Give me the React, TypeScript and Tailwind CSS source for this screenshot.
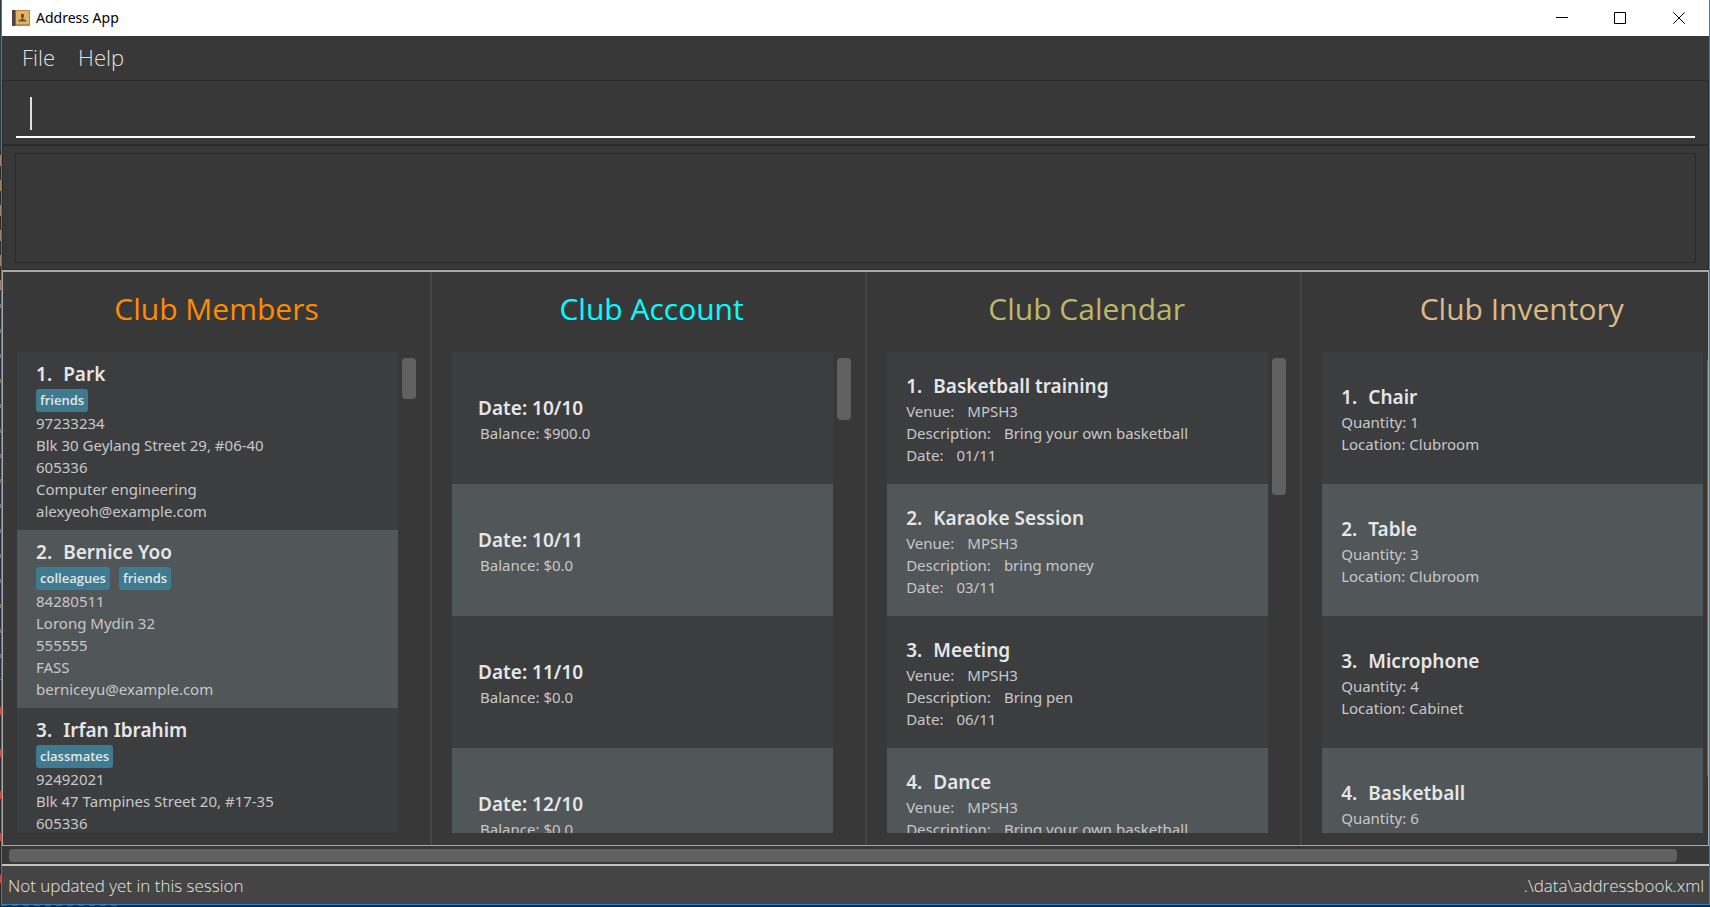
import type { ReactNode } from "react";

type Member = { name: string; tags: string[]; lines: string[] };

const members: Member[] = [
  {
    name: "Park",
    tags: ["friends"],
    lines: ["97233234", "Blk 30 Geylang Street 29, #06-40", "605336", "Computer engineering", "alexyeoh@example.com"],
  },
  {
    name: "Bernice Yoo",
    tags: ["colleagues", "friends"],
    lines: ["84280511", "Lorong Mydin 32", "555555", "FASS", "berniceyu@example.com"],
  },
  {
    name: "Irfan Ibrahim",
    tags: ["classmates"],
    lines: ["92492021", "Blk 47 Tampines Street 20, #17-35", "605336"],
  },
];

const accounts = [
  { date: "10/10", balance: "$900.0" },
  { date: "10/11", balance: "$0.0" },
  { date: "11/10", balance: "$0.0" },
  { date: "12/10", balance: "$0.0" },
];

const events = [
  { name: "Basketball training", venue: "MPSH3", description: "Bring your own basketball", date: "01/11" },
  { name: "Karaoke Session", venue: "MPSH3", description: "bring money", date: "03/11" },
  { name: "Meeting", venue: "MPSH3", description: "Bring pen", date: "06/11" },
  { name: "Dance", venue: "MPSH3", description: "Bring your own basketball", date: "" },
];

const items = [
  { name: "Chair", quantity: 1, location: "Clubroom" },
  { name: "Table", quantity: 3, location: "Clubroom" },
  { name: "Microphone", quantity: 4, location: "Cabinet" },
  { name: "Basketball", quantity: 6, location: "" },
];

const row = "shrink-0 odd:bg-[#3c3d3f] even:bg-[#515658]";
const centered = `${row} flex h-[132px] flex-col justify-center pl-[19px]`;

function AppIcon() {
  return (
    <svg width="18" height="18" viewBox="0 0 18 18" aria-hidden="true">
      <rect x="0" y="1" width="18" height="16" fill="#b98a4c" />
      <rect x="0" y="1" width="3" height="16" fill="#4c4245" />
      <rect x="3" y="1" width="1" height="16" fill="#8a6a45" />
      <rect x="4" y="2" width="13" height="13" fill="#e2b364" />
      <path d="M9 5h3v2.600l-.8 1.400v1.200l2.800.8v1.500H6.500V11l3.200-.8V9L9 7.600z" fill="#6b4f2c" />
    </svg>
  );
}

function Heading({ index, children }: { index?: number; children: ReactNode }) {
  return (
    <h3 className="flex gap-[11px] text-[19px] leading-7 font-semibold text-[#e6e6e6]">
      {index !== undefined && <span>{index}.</span>}
      <span>{children}</span>
    </h3>
  );
}

function Field({ label, value }: { label: string; value: string }) {
  return (
    <p className="flex gap-[13px]">
      <span>{label}:</span>
      <span>{value}</span>
    </p>
  );
}

type ColumnProps = { title: string; titleClass: string; thumbClass: string; first?: boolean; children: ReactNode };

function Column({ title, titleClass, thumbClass, first, children }: ColumnProps) {
  return (
    <section
      className={`flex min-w-0 flex-1 flex-col pr-[14px] pb-3 ${first ? "pl-[14px]" : "border-l-2 border-[#454545] pl-5"}`}
    >
      <h2 className={`flex h-20 shrink-0 items-center justify-center pb-2 text-[30px] ${titleClass}`}>{title}</h2>
      <div className="flex min-h-0 flex-1 gap-1">
        <ul className="flex min-w-0 flex-1 flex-col overflow-hidden font-['Noto_Sans',sans-serif] text-[15px] leading-[22px] text-[#c8c8c8]">
          {children}
        </ul>
        <div className="w-[14px] pt-[6px]">
          <div className={`rounded bg-[#606060] ${thumbClass}`} />
        </div>
      </div>
    </section>
  );
}

export default function App() {
  return (
    <div className="flex h-screen overflow-hidden bg-[#20242a] font-['Open_Sans',sans-serif]">
      {/* Sliver of the desktop showing beside the window */}
      <div className="flex w-px shrink-0 flex-col">
        <div className="h-[150px] bg-[#2c3b4a]" />
        <div className="h-[140px] bg-[repeating-linear-gradient(#2b2b2b_0_5px,#a08060_5px_16px,#2b2b2b_16px_25px)]" />
        <div className="h-[390px] bg-[repeating-linear-gradient(#26333f_0_14px,#7d7468_14px_18px,#26333f_18px_25px)]" />
        <div className="flex-1 bg-[repeating-linear-gradient(#2b2b2b_0_27px,#d04a3c_27px_35px,#2b2b2b_35px_42px)]" />
      </div>
      <div className="flex min-w-0 flex-1 flex-col">
        <div className="flex min-h-0 flex-1 flex-col border-x border-b border-[#1f85d8] bg-[#383838]">
          <header className="flex h-9 shrink-0 items-center bg-white pl-[10px] text-black">
            <AppIcon />
            <h1 className="flex-1 pb-px pl-[6px] font-['Noto_Sans',sans-serif] text-[14px]">Address App</h1>
            <button aria-label="Minimize" className="flex h-9 w-[58px] items-center justify-center pb-px">
              <svg width="12" height="12" viewBox="0 0 12 12" stroke="currentColor"><path d="M0 5.500h12" /></svg>
            </button>
            <button aria-label="Maximize" className="flex h-9 w-[58px] items-center justify-center pb-px">
              <svg width="12" height="12" viewBox="0 0 12 12" stroke="currentColor" fill="none"><path d="M.5.5h11v11H.5z" /></svg>
            </button>
            <button aria-label="Close" className="flex h-9 w-[60px] items-center justify-center pb-px">
              <svg width="12" height="12" viewBox="0 0 12 12" stroke="currentColor"><path d="M.3.3l11.400 11.400M11.700.3L.3 11.700" /></svg>
            </button>
          </header>

          <nav className="flex h-11 shrink-0 items-center gap-[23px] pb-[2px] pl-5 text-[22px] font-light text-[#e0e0e0]">
            <button>File</button>
            <button>Help</button>
          </nav>

          <div className="relative h-[66px] shrink-0 border-x border-t border-b-2 border-[#2b2b2b] px-[13px] pt-2">
            <input
              aria-label="Command"
              className="block h-[49px] w-full border-b-2 border-white bg-transparent px-[14px] text-[27px] font-light text-white caret-transparent outline-none"
            />
            {/* Text caret */}
            <span className="absolute top-4 left-[27px] h-[33px] w-[2px] bg-[#e0e0e0]" />
          </div>

          <div className="h-[124px] shrink-0 border-x border-b border-[#2b2b2b] px-3 pt-[7px] pb-[6px]">
            <output aria-label="Result" className="block h-full border border-[#2b2b2b]" />
          </div>

          <main className="flex min-h-0 flex-1 overflow-hidden border border-t-2 border-[#a8a8a8]">
            <div className="flex w-[101.6%] shrink-0">
              <Column title="Club Members" titleClass="text-[#ff8c00]" thumbClass="h-[41px]" first>
                {members.map((m, i) => (
                  <li key={m.name} className={`${row} h-[178px] pt-2 pl-[19px]`}>
                    <Heading index={i + 1}>{m.name}</Heading>
                    <div className="flex gap-[9px] pt-px">
                      {m.tags.map((t) => (
                        <span
                          key={t}
                          className="h-[23px] rounded-[3px] bg-[#3e7b91] px-1 font-['Open_Sans',sans-serif] text-[13px] font-semibold text-[#e6e6e6]"
                        >
                          {t}
                        </span>
                      ))}
                    </div>
                    {m.lines.map((l) => (
                      <p key={l}>{l}</p>
                    ))}
                  </li>
                ))}
              </Column>

              <Column title="Club Account" titleClass="text-[#00ffff]" thumbClass="h-[62px]">
                {accounts.map((a) => (
                  <li key={a.date} className={centered}>
                    <div className="pt-px pl-[7px]">
                      <Heading>Date: {a.date}</Heading>
                      <p className="pl-[2px]">Balance: {a.balance}</p>
                    </div>
                  </li>
                ))}
              </Column>

              <Column title="Club Calendar" titleClass="text-[#bdb76b]" thumbClass="h-[137px]">
                {events.map((e, i) => (
                  <li key={e.name} className={`${centered} pt-px`}>
                    <Heading index={i + 1}>{e.name}</Heading>
                    <Field label="Venue" value={e.venue} />
                    <Field label="Description" value={e.description} />
                    <Field label="Date" value={e.date} />
                  </li>
                ))}
              </Column>

              <Column title="Club Inventory" titleClass="text-[#deb887]" thumbClass="h-[420px]">
                {items.map((it, i) => (
                  <li key={it.name} className={`${centered} pt-px`}>
                    <Heading index={i + 1}>{it.name}</Heading>
                    <p>Quantity: {it.quantity}</p>
                    <p>Location: {it.location}</p>
                  </li>
                ))}
              </Column>
            </div>
          </main>

          <div className="h-[18px] shrink-0 pt-[3px] pr-8 pl-[7px]">
            <div className="h-[13px] rounded bg-[#606060]" />
          </div>

          <footer className="flex h-10 shrink-0 items-center justify-between border-t-2 border-[#c0c0c0] bg-[#444444] pt-px pr-[5px] pl-[6px] text-[17px] font-light text-[#e6e6e6]">
            <span>Not updated yet in this session</span>
            <span>.\data\addressbook.xml</span>
          </footer>
        </div>
        <div className="h-[2px] shrink-0">
          <div className="h-px w-[118px] bg-[repeating-linear-gradient(90deg,#a04038_0_6px,#20242a_6px_11px)]" />
        </div>
      </div>
    </div>
  );
}
